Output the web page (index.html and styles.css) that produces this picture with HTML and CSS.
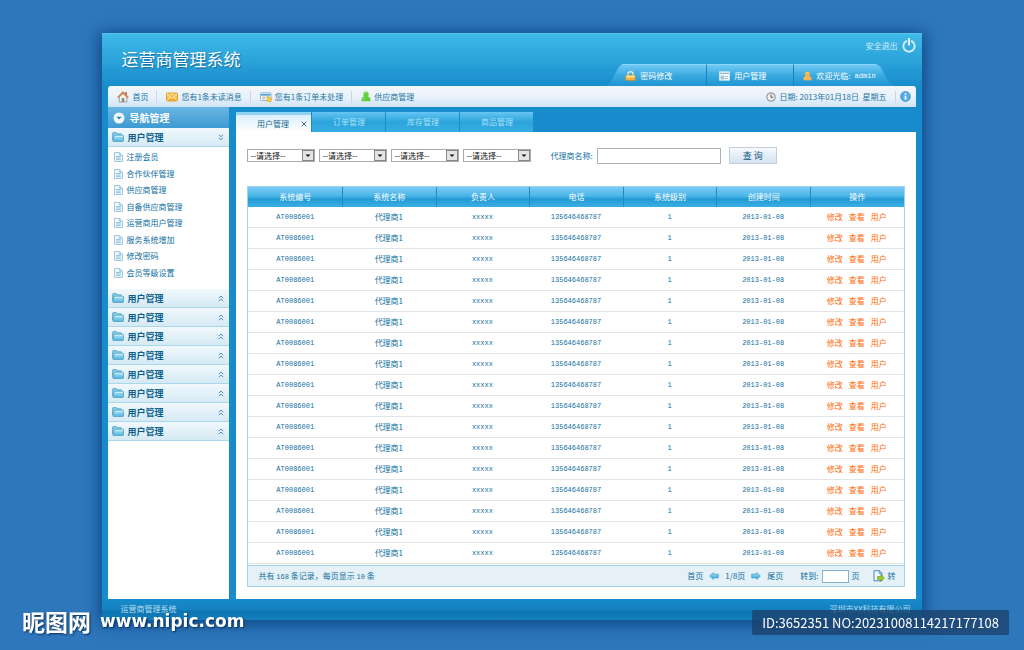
FILE: index.html
```html
<!DOCTYPE html>
<html lang="zh-CN">
<head>
    <meta charset="UTF-8">
    <meta name="viewport" content="width=device-width, initial-scale=1.0">
    <title>运营商管理系统</title>
    <link rel="stylesheet" href="styles.css">
</head>
<body>

<!-- Icons -->
<svg class="sprite" width="0" height="0" aria-hidden="true">
  <defs>
    <linearGradient id="g-folder" x1="0" y1="0" x2="0" y2="1">
      <stop offset="0" stop-color="#b4e8f8"/><stop offset="1" stop-color="#4fb3dc"/>
    </linearGradient>
    <linearGradient id="g-gold" x1="0" y1="0" x2="0" y2="1">
      <stop offset="0" stop-color="#ffe48a"/><stop offset="1" stop-color="#f0a020"/>
    </linearGradient>
    <linearGradient id="g-arrow" x1="0" y1="0" x2="0" y2="1">
      <stop offset="0" stop-color="#a4e4fa"/><stop offset="1" stop-color="#2fa5dc"/>
    </linearGradient>
  </defs>
  <symbol id="i-folder" viewBox="0 0 12 10">
    <path d="M.5 8V1.500q0-1 1-1h2.800l1 1.200h3.500q.8 0 .8 1v1" fill="#7fcbe6" stroke="#4a9fc2" stroke-width=".7"/>
    <path d="M2.300 3.300h8.700q.6 0 .5.600v4.900q0 .7-.7.700H1.600q-.9 0-.8-.8z" fill="url(#g-folder)" stroke="#3a8fb6" stroke-width=".6"/>
    <path d="M2.800 4.300h7.800" stroke="#e6f8fe" stroke-width=".7"/>
  </symbol>
  <symbol id="i-doc" viewBox="0 0 9 10">
    <path d="M.5.5h5.200l2.800 2.700v6.300h-8z" fill="#eef7fc" stroke="#94c4dd" stroke-width=".9"/>
    <path d="M5.600.6v2.700h2.800" fill="#b6dbee" stroke="#94c4dd" stroke-width=".8"/>
    <path d="M2 4.500h4.800M2 6h4.800M2 7.600h4.800" stroke="#7fb7d6" stroke-width=".8"/>
  </symbol>
  <symbol id="i-down" viewBox="0 0 6 7">
    <path d="M.8.700 3 2.700 5.200.7M.8 3.700 3 5.700 5.200 3.700" fill="none" stroke="#3f80bd" stroke-width=".9"/>
  </symbol>
  <symbol id="i-up" viewBox="0 0 6 7">
    <path d="M.8 3.100 3 1.100 5.200 3.100M.8 6.100 3 4.100 5.200 6.100" fill="none" stroke="#3f80bd" stroke-width=".9"/>
  </symbol>
  <symbol id="i-home" viewBox="0 0 12 12">
    <path d="M2.200 6v5h7.600V6L6 2.300z" fill="#f4f1ee" stroke="#8f8a86" stroke-width=".8"/>
    <path d="M8.300 1h1.500v3H8.300z" fill="#b55a32"/>
    <path d="M.8 6.500 6 1.300l5.200 5.200" fill="none" stroke="#df7440" stroke-width="1.600"/>
    <path d="M4.700 7h2.600v4H4.700z" fill="#8b8d92"/>
  </symbol>
  <symbol id="i-mail" viewBox="0 0 12 10">
    <rect x=".5" y="1" width="11" height="8" rx=".8" fill="url(#g-gold)" stroke="#dc9a25" stroke-width=".9"/>
    <path d="M1 1.600 6 5.800l5-4.200M1 8.600l3.600-3.800M11 8.600 7.400 4.800" fill="none" stroke="#fff4c4" stroke-width=".9"/>
    <path d="M1.500 1.300 6 5l4.500-3.700" fill="none" stroke="#d38f20" stroke-width=".6"/>
  </symbol>
  <symbol id="i-order" viewBox="0 0 12 10">
    <rect x=".5" y=".8" width="10.500" height="7.700" rx=".8" fill="#f5f8fa" stroke="#88a7bb" stroke-width=".8"/>
    <path d="M1 2.800h9.500" stroke="#54a9dc" stroke-width="1.800"/>
    <path d="M2 5.300h4M2 6.800h3" stroke="#8fa3b0" stroke-width=".7"/>
    <path d="m7 4.500 1.200-.5 3.300 3-.8 2.500H7.800L6.500 7.800l1-.6z" fill="#f9d43f" stroke="#c99316" stroke-width=".6"/>
  </symbol>
  <symbol id="i-user" viewBox="0 0 10 11">
    <path d="M.5 10.200q-.3-4.200 2.700-4.600h3.600q3 .4 2.700 4.600z" fill="currentColor"/>
    <ellipse cx="5" cy="3.500" rx="2.700" ry="3.100" fill="currentColor"/>
    <path d="M3.500 2.500q.9-1.200 2.400-.7M1.900 8.300q.2-1.200 1.400-1.500" stroke="#fff" stroke-opacity=".6" stroke-width=".8" fill="none"/>
  </symbol>
  <symbol id="i-clock" viewBox="0 0 10 10">
    <circle cx="5" cy="5" r="4.200" fill="#f2f2f0" stroke="#9a9c9d" stroke-width="1.200"/>
    <path d="M5 2.300v3h2.300" fill="none" stroke="#55595c" stroke-width="1"/>
  </symbol>
  <symbol id="i-info" viewBox="0 0 11 11">
    <circle cx="5.500" cy="5.500" r="4.900" fill="#55aee5" stroke="#3b8fcb" stroke-width=".8"/>
    <path d="M5.500 2.200v1.600M5.500 4.700v4" stroke="#fff" stroke-width="1.700"/>
  </symbol>
  <symbol id="i-lock" viewBox="0 0 11 10">
    <path d="M3 5V2.800q0-2 2.500-2T8 2.800V5" fill="none" stroke="#e9e6dc" stroke-width="1.400"/>
    <rect x=".8" y="4.200" width="9.400" height="5.400" rx=".8" fill="url(#g-gold)" stroke="#c98a1a" stroke-width=".6"/>
    <path d="M1.600 5.300h7.800" stroke="#fff3bd" stroke-width=".8"/>
  </symbol>
  <symbol id="i-card" viewBox="0 0 11 10">
    <rect x=".5" y=".8" width="10" height="8.400" fill="#f6fbfe" stroke="#d6e8f3" stroke-width=".8"/>
    <path d="M1 2.300h9" stroke="#8fb9d3" stroke-width="1.200"/>
    <path d="M2 5h2.500v3H2zM5.500 5.500H9M5.500 7.500H9" stroke="#90b4c9" stroke-width=".8" fill="#b7cfdd"/>
  </symbol>
  <symbol id="i-power" viewBox="0 0 14 15">
    <path d="M4.300 3.200a5.600 5.600 0 1 0 5.400 0" fill="none" stroke="#d5ecf8" stroke-width="1.900" stroke-linecap="round"/>
    <path d="M7 .8v6" stroke="#f2fafe" stroke-width="1.800" stroke-linecap="round"/>
  </symbol>
  <symbol id="i-nav" viewBox="0 0 12 12">
    <circle cx="6" cy="6" r="5.500" fill="#f2f9fd"/>
    <path d="M3.300 4.800h5.400L6 7.600z" fill="#2383bd"/>
  </symbol>
  <symbol id="i-prev" viewBox="0 0 10 8">
    <path d="M.6 4 4.300.6v1.500h5v3.800h-5v1.500z" fill="url(#g-arrow)" stroke="#3196c6" stroke-width=".6" stroke-linejoin="round"/>
  </symbol>
  <symbol id="i-next" viewBox="0 0 10 8">
    <path d="M9.400 4 5.700.6v1.500h-5v3.800h5v1.500z" fill="url(#g-arrow)" stroke="#3196c6" stroke-width=".6" stroke-linejoin="round"/>
  </symbol>
  <symbol id="i-go" viewBox="0 0 12 12">
    <path d="M1 .7h5.500l2.500 2.500v7.600H1z" fill="#edf6fb" stroke="#2d80ae" stroke-width=".9"/>
    <path d="M6.300.8v2.600H9" fill="none" stroke="#2d80ae" stroke-width=".8"/>
    <path d="M4.500 6.600h3.200V4.700l3.800 3.300-3.800 3.300V9.400H4.500z" fill="#a2cb2c" stroke="#678c17" stroke-width=".6"/>
  </symbol>
</svg>

<div class="app">
  <!-- Header -->
  <header class="header">
    <h1>运营商管理系统</h1>
    <div class="header-right">
      <a href="#" class="logout">安全退出 <svg width="14" height="15"><use href="#i-power"/></svg></a>
      <nav class="user-tabs">
        <a href="#"><svg width="11" height="10"><use href="#i-lock"/></svg>密码修改</a>
        <a href="#"><svg width="11" height="10"><use href="#i-card"/></svg>用户管理</a>
        <a href="#"><svg class="orange" width="9" height="10"><use href="#i-user"/></svg>欢迎光临: <span class="mono">admin</span></a>
      </nav>
    </div>
  </header>

  <!-- Message bar -->
  <div class="topbar">
    <a href="#"><svg width="12" height="12"><use href="#i-home"/></svg>首页</a>
    <a href="#"><svg width="12" height="10"><use href="#i-mail"/></svg>您有1条未读消息</a>
    <a href="#"><svg width="12" height="10"><use href="#i-order"/></svg>您有1条订单未处理</a>
    <a href="#"><svg class="green" width="10" height="11"><use href="#i-user"/></svg>供应商管理</a>
    <span class="date"><svg width="10" height="10"><use href="#i-clock"/></svg>日期: 2013年01月18日&nbsp; 星期五</span>
    <a href="#" class="info" aria-label="信息"><svg width="11" height="11"><use href="#i-info"/></svg></a>
  </div>

  <div class="main">
    <!-- Sidebar -->
    <aside class="sidebar">
      <h2><svg width="12" height="12"><use href="#i-nav"/></svg>导航管理</h2>
      <button class="group"><svg width="12" height="10"><use href="#i-folder"/></svg>用户管理<svg class="chevron" width="6" height="7"><use href="#i-down"/></svg></button>
      <ul class="submenu">
        <li><a href="#"><svg width="9" height="10"><use href="#i-doc"/></svg>注册会员</a></li>
        <li><a href="#"><svg width="9" height="10"><use href="#i-doc"/></svg>合作伙伴管理</a></li>
        <li><a href="#"><svg width="9" height="10"><use href="#i-doc"/></svg>供应商管理</a></li>
        <li><a href="#"><svg width="9" height="10"><use href="#i-doc"/></svg>自备供应商管理</a></li>
        <li><a href="#"><svg width="9" height="10"><use href="#i-doc"/></svg>运营商用户管理</a></li>
        <li><a href="#"><svg width="9" height="10"><use href="#i-doc"/></svg>服务系统增加</a></li>
        <li><a href="#"><svg width="9" height="10"><use href="#i-doc"/></svg>修改密码</a></li>
        <li><a href="#"><svg width="9" height="10"><use href="#i-doc"/></svg>会员等级设置</a></li>
      </ul>
      <div id="groups"></div>
    </aside>

    <!-- Content -->
    <section class="content">
      <nav class="tabs">
        <a href="#" class="active">用户管理<svg class="close" width="6" height="6" viewBox="0 0 6 6"><path d="M.6.600l4.800 4.800M5.400.600.6 5.400" stroke="#4a6fb0" stroke-width="1"/></svg></a>
        <a href="#">订单管理</a>
        <a href="#">库存管理</a>
        <a href="#">商品管理</a>
      </nav>
      <div class="panel">
        <form class="filter">
          <select aria-label="条件一"><option>--请选择--</option></select>
          <select aria-label="条件二"><option>--请选择--</option></select>
          <select aria-label="条件三"><option>--请选择--</option></select>
          <select aria-label="条件四"><option>--请选择--</option></select>
          <label for="agent">代理商名称:</label>
          <input type="text" id="agent">
          <button type="button">查 询</button>
        </form>

        <div class="table-box">
          <table id="agentTable">
            <thead>
              <tr>
                <th>系统编号</th>
                <th>系统名称</th>
                <th>负责人</th>
                <th>电话</th>
                <th>系统级别</th>
                <th>创建时间</th>
                <th>操作</th>
              </tr>
            </thead>
            <tbody></tbody>
          </table>
          <div class="pager">
            <span class="total">共有 <span class="mono">168</span> 条记录，每页显示 <span class="mono">10</span> 条</span>
            <a href="#">首页</a>
            <a href="#" aria-label="上一页"><svg width="10" height="8"><use href="#i-prev"/></svg></a>
            <span>1/8页</span>
            <a href="#" aria-label="下一页"><svg width="10" height="8"><use href="#i-next"/></svg></a>
            <a href="#">尾页</a>
            <span class="jump"><label for="page">转到:</label><input type="text" id="page">页</span>
            <a href="#" class="go"><svg width="12" height="12"><use href="#i-go"/></svg>转</a>
          </div>
        </div>
      </div>
    </section>
  </div>

  <footer class="footer">
    <span>运营商管理系统</span>
    <span>深圳市XX科技有限公司</span>
  </footer>
</div>

<div class="mark mark-left"><span class="mark-name">昵图网</span><span>www.nipic.com</span></div>
<div class="mark mark-right">ID:3652351 NO:20231008114217177108</div>

<script>
  // closed sidebar groups
  const groups = document.getElementById('groups');
  for (let i = 0; i < 8; i++) {
    groups.innerHTML += `<button class="group"><svg width="12" height="10"><use href="#i-folder"/></svg>用户管理<svg class="chevron" width="6" height="7"><use href="#i-up"/></svg></button>`;
  }

  // table rows
  const tableBody = document.querySelector('#agentTable tbody');
  for (let i = 0; i < 17; i++) {
    const row = document.createElement('tr');
    row.innerHTML = `
      <td class="mono">AT0086001</td>
      <td>代理商1</td>
      <td class="mono">xxxxx</td>
      <td class="mono">135646468787</td>
      <td class="mono">1</td>
      <td class="mono">2013-01-08</td>
      <td class="ops"><a href="#">修改</a><a href="#">查看</a><a href="#">用户</a></td>
    `;
    tableBody.appendChild(row);
  }
</script>

</body>
</html>
```
FILE: styles.css
```css
* {
  box-sizing: border-box;
}

body {
  margin: 0;
  padding: 33px 0 30px;
  background: #2e77bb;
  font-family: "Noto Sans CJK SC", sans-serif;
  font-size: 8px;
  line-height: 12px;
  color: #0f6f9f;
}

a {
  color: inherit;
  text-decoration: none;
}

svg {
  flex: none;
}

button, input, select {
  font-family: inherit;
  font-size: 8px;
  color: inherit;
}

.sprite {
  position: absolute;
}

.mono {
  font-family: "Liberation Mono", monospace;
  font-size: 7px;
}

.orange {
  color: #f7b24a;
}

.green {
  color: #5fcf3c;
}

.app {
  width: 80%;
  margin: 0 auto;
  padding: 0 6px;
  background: linear-gradient(#3fb9e8, #178bcb 54px);
  border-top: 1px solid #55c4ee;
  box-shadow: 0 2px 14px 3px rgba(0, 55, 115, 0.7);
}

/* Header */
.header {
  display: flex;
  justify-content: space-between;
  height: 52px;
  padding-left: 13px;
}

.header h1 {
  margin: 12px 0 0;
  font-size: 17px;
  line-height: 26px;
  font-weight: normal;
  color: #fff;
  text-shadow: 1px 1px 1px rgba(0, 60, 110, 0.5);
}

.header-right {
  display: flex;
  flex-direction: column;
  justify-content: space-between;
  align-items: flex-end;
}

.logout {
  display: flex;
  align-items: center;
  gap: 4px;
  padding: 4px 0 0;
  color: #d8eef9;
}

.user-tabs {
  display: flex;
  height: 22px;
  margin-right: 20px;
  color: #fff;
  clip-path: polygon(0 100%, 1% 92%, 2% 80%, 4% 28%, 5% 8%, 6% 0, 93% 0, 94% 4%, 95% 16%, 97% 68%, 98% 86%, 100% 100%);
}

.user-tabs a {
  display: flex;
  align-items: center;
  gap: 4px;
  padding: 0 27px 0 12px;
  background: linear-gradient(#6fc9f5, #3aaae0 50%, #1f95d2);
  border-top: 1px solid #8ad6f8;
  border-left: 1px solid #1b83bd;
}

.user-tabs a:first-child {
  padding-left: 20px;
  padding-right: 34px;
  border-left: none;
}

.user-tabs a:last-child {
  padding-left: 9px;
  padding-right: 20px;
}

/* Message bar */
.topbar {
  display: flex;
  align-items: center;
  height: 21px;
  padding-right: 5px;
  background: linear-gradient(#f3f6fb, #e9f1fb 55%, #cfe4f8);
  border-radius: 3px 3px 0 0;
  color: #1c779f;
}

.topbar a, .topbar .date {
  display: flex;
  align-items: center;
  gap: 3px;
  padding: 0 8px 0 9px;
  border-right: 1px solid #ccd6e0;
}

.topbar a:nth-child(4) {
  border-right: none;
}

.topbar .date {
  margin-left: auto;
}

.topbar .info {
  padding: 0 0 0 4px;
  border-right: none;
}

.main {
  display: flex;
  gap: 7px;
}

/* Sidebar */
.sidebar {
  width: 15%;
  background: #fff;
}

.sidebar h2 {
  display: flex;
  align-items: center;
  gap: 4px;
  height: 21px;
  margin: 0;
  padding-left: 5px;
  font-size: 10px;
  color: #fff;
  background: linear-gradient(#69b5e3, #3d9bd3);
}

.group {
  display: flex;
  align-items: center;
  gap: 3px;
  width: 100%;
  height: 19px;
  padding: 0 5px 0 4px;
  border: none;
  border-bottom: 1px solid #a9d8ed;
  background: linear-gradient(#f1f8fc, #d5eaf5);
  font-size: 9px;
  font-weight: bold;
  color: #0b5f8c;
}

.chevron {
  margin-left: auto;
}

.submenu {
  display: grid;
  min-height: 142px;
  margin: 0;
  padding: 2px 0 8px 6px;
  list-style: none;
}

.submenu a {
  display: flex;
  align-items: center;
  gap: 3px;
  height: 100%;
}

/* Content */
.content {
  flex: 1;
  padding-top: 5px;
}

.tabs {
  display: flex;
  height: 20px;
}

.tabs a {
  display: flex;
  align-items: center;
  justify-content: center;
  width: 74px;
  color: #a9e0f8;
  background: linear-gradient(#66c5f3, #2ba4dc 50%, #36aee4);
  border-right: 1px solid #1c8cc8;
}

.tabs .active {
  width: 76px;
  padding-left: 16px;
  padding-top: 3px;
  color: #13698f;
  background: linear-gradient(#8fd3f4 3px, #dceefa 3px, #fff);
}

.tabs .close {
  margin-left: 12px;
}

.panel {
  padding: 15px 11px 12px;
  background: #fff;
}

.filter {
  display: flex;
  align-items: center;
  gap: 4px;
  height: 17px;
  margin-bottom: 22px;
}

.filter select {
  width: 68px;
  height: 13px;
  padding: 0 0 0 2px;
  border: 1px solid #a9a9a9;
  border-radius: 0;
  appearance: none;
  color: #111;
  background: #fff url("data:image/svg+xml,%3Csvg xmlns='http://www.w3.org/2000/svg' width='12' height='11'%3E%3Crect x='.5' y='.5' width='11' height='10' fill='%23e4e4e4' stroke='%23888'/%3E%3Cpath d='M3.500 4.500h5L6 7z' fill='%23111'/%3E%3C/svg%3E") no-repeat right center;
}

.filter label {
  margin-left: 15px;
}

.filter input {
  width: 124px;
  height: 16px;
  border: 1px solid #a9b4ba;
  padding: 0 3px;
}

.filter button {
  width: 48px;
  height: 17px;
  margin-left: 4px;
  padding: 0;
  border: 1px solid #c3d0dc;
  background: linear-gradient(#f7fafd, #d3e2f2);
  font-size: 9px;
  color: #13597f;
}

/* Agent table */
.table-box {
  border: 1px solid #9fd3ea;
}

table {
  width: 100%;
  border-collapse: separate;
  border-spacing: 0;
  table-layout: fixed;
}

thead tr {
  background: linear-gradient(#7accf7, #4bb5e8 45%, #249bd4 60%, #3baee4);
}

th {
  height: 20px;
  padding: 0;
  font-weight: normal;
  color: #fff;
}

th + th {
  border-left: 1px solid #2589bd;
}

td {
  height: 21px;
  padding: 0;
  text-align: center;
  border-bottom: 1px solid #dfe5e8;
}

.ops {
  color: #ff6c0a;
}

.ops a + a {
  margin-left: 6px;
}

.pager {
  display: flex;
  align-items: center;
  gap: 6px;
  height: 21px;
  margin-top: 1px;
  padding: 0 8px 0 10px;
  border-top: 1px solid #9fd3ea;
  background: #e5f1f7;
}

.pager a {
  display: flex;
  align-items: center;
  gap: 3px;
}

.total {
  margin-right: auto;
}

.jump {
  display: flex;
  align-items: center;
  gap: 3px;
  margin-left: 11px;
}

.jump input {
  width: 27px;
  height: 13px;
  padding: 0 2px;
  border: 1px solid #7fb3d4;
}

.go {
  margin-left: 7px;
}

/* Footer */
.footer {
  display: flex;
  justify-content: space-between;
  height: 21px;
  margin: 0 -6px;
  padding: 4px 11px 0 18px;
  color: #b5dcf0;
  background: linear-gradient(#178bcb, #1480bf 11px, #0d74b0 12px, #1380bd);
}

/* Marks over the page */
.mark {
  position: fixed;
  color: #fff;
}

.mark-left {
  display: flex;
  align-items: center;
  gap: 9px;
  left: 22px;
  bottom: 18px;
  font-family: "DejaVu Sans", sans-serif;
  font-size: 17px;
  font-weight: bold;
  line-height: 22px;
  text-shadow: 1px 1px 2px rgba(0, 30, 70, 0.8);
}

.mark-name {
  font-family: "Noto Sans CJK SC", sans-serif;
  font-size: 23px;
}

.mark-right {
  right: 15px;
  bottom: 15px;
  padding: 0 10px;
  font-size: 13px;
  line-height: 25px;
  background: rgba(27, 66, 110, 0.8);
  border-radius: 2px;
}
```
